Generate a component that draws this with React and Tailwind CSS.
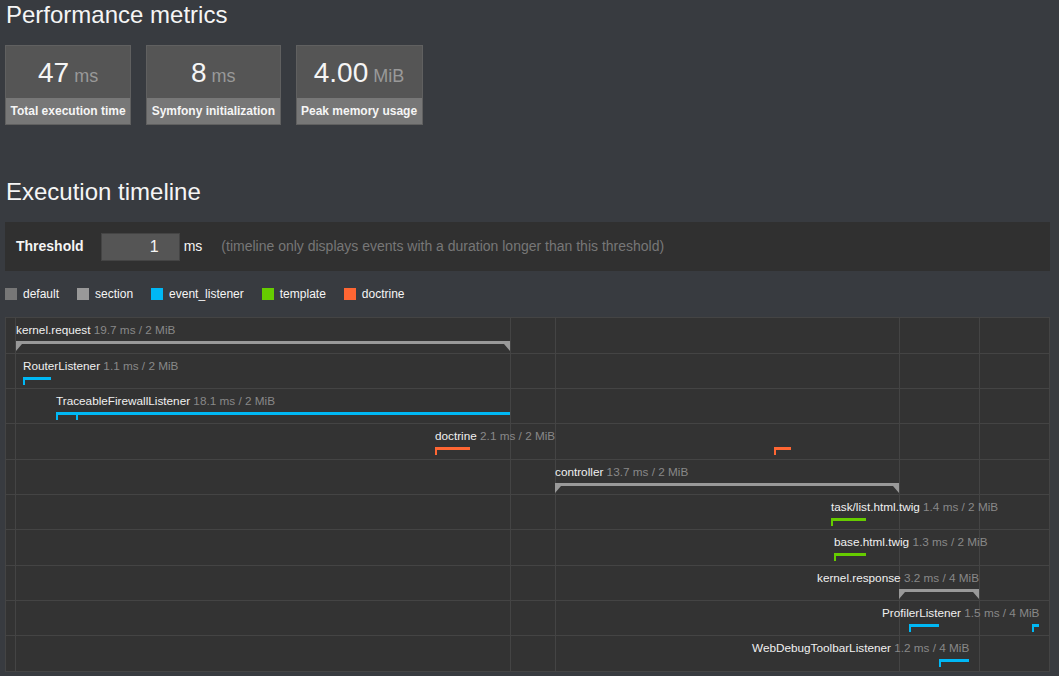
import React from 'react';

const BG = {
  section: 'bg-[#999999]',
  event_listener: 'bg-[#00b8f5]',
  template: 'bg-[#66cc00]',
  doctrine: 'bg-[#ff6633]',
};

const ROWS = [
  { h: 'h-[36px] border-b', name: 'kernel.request', info: '19.7 ms / 2 MiB', x: 16, cat: 'section', periods: [[16, 510]] },
  { h: 'h-[35px] border-b', name: 'RouterListener', info: '1.1 ms / 2 MiB', x: 23, cat: 'event_listener', periods: [[23, 51]] },
  { h: 'h-[35px] border-b', name: 'TraceableFirewallListener', info: '18.1 ms / 2 MiB', x: 56, cat: 'event_listener', periods: [[56, 76], [76, 510]] },
  { h: 'h-[36px] border-b', name: 'doctrine', info: '2.1 ms / 2 MiB', x: 435, cat: 'doctrine', periods: [[435, 470], [774, 791]] },
  { h: 'h-[35px] border-b', name: 'controller', info: '13.7 ms / 2 MiB', x: 555, cat: 'section', periods: [[555, 899]] },
  { h: 'h-[35px] border-b', name: 'task/list.html.twig', info: '1.4 ms / 2 MiB', x: 831, cat: 'template', periods: [[831, 866]] },
  { h: 'h-[36px] border-b', name: 'base.html.twig', info: '1.3 ms / 2 MiB', x: 834, cat: 'template', periods: [[834, 866]] },
  { h: 'h-[35px] border-b', name: 'kernel.response', info: '3.2 ms / 4 MiB', x: 817, cat: 'section', periods: [[899, 979]] },
  { h: 'h-[35px] border-b', name: 'ProfilerListener', info: '1.5 ms / 4 MiB', x: 882, cat: 'event_listener', periods: [[909, 939], [1032, 1039]] },
  { h: 'h-[35px]', name: 'WebDebugToolbarListener', info: '1.2 ms / 4 MiB', x: 752, cat: 'event_listener', periods: [[939, 969]] },
];

const GRID = [15, 510, 555, 899, 979];
const OFF = 6;

function Metric({ value, unit, label }) {
  return (
    <div className="border border-[#606060] bg-[#555555]">
      <div className="h-[52px] pt-[2px] text-center leading-[50px]">
        <span className="text-[28px] text-[#f5f5f5]">{value}</span>
        <span className="text-[18px] text-[#999999]"> {unit}</span>
      </div>
      <div className="h-[26px] bg-[#777777] px-[4.5px] text-center text-[12px] font-bold leading-[26px] text-[#f5f5f5] whitespace-nowrap">
        {label}
      </div>
    </div>
  );
}

function Period({ cat, from, to }) {
  const w = to - from;
  if (cat === 'section') {
    return (
      <svg
        className="absolute top-[23px]"
        style={{ left: from - OFF, width: w, height: 10 }}
        viewBox={`0 0 ${w} 10`}
      >
        <polygon
          className="fill-[#999999]"
          points={`0,0 ${w},0 ${w},10 ${w - 6},3 6,3 0,10`}
        />
      </svg>
    );
  }
  return (
    <div className="absolute top-[23px] h-[8px]" style={{ left: from - OFF, width: w }}>
      <div className={`h-[3px] w-full ${BG[cat]}`} />
      <div className={`absolute left-0 top-0 h-[8px] w-[2px] ${BG[cat]}`} />
    </div>
  );
}

function Legend({ cls, label }) {
  return (
    <div className="flex items-center mr-[18px]">
      <span className={`w-[12px] h-[12px] ${cls}`} />
      <span className="ml-[6px] text-[12px] leading-[12px] text-[#f5f5f5]">{label}</span>
    </div>
  );
}

export default function App() {
  return (
    <div className="min-h-screen w-full overflow-hidden bg-[#383b40] pl-[5px] font-['Liberation_Sans',Arial,Helvetica,sans-serif] text-[#f5f5f5]">
      <h2 className="pt-px pl-px text-[24px] leading-[28px] font-normal">Performance metrics</h2>

      <div className="mt-[16px] flex gap-[15px]">
        <Metric value="47" unit="ms" label="Total execution time" />
        <Metric value="8" unit="ms" label="Symfony initialization" />
        <Metric value="4.00" unit="MiB" label="Peak memory usage" />
      </div>

      <h2 className="mt-[52px] pt-px pl-px text-[24px] leading-[28px] font-normal">Execution timeline</h2>

      <div className="mt-[16px] flex h-[49px] w-[1045px] items-center bg-[#303030] pl-[11px]">
        <span className="text-[14px] font-bold text-[#f5f5f5]">Threshold</span>
        <input
          readOnly
          value="1"
          className="ml-[17px] h-[28px] w-[79px] border border-[#444444] bg-[#555555] pr-[20px] text-right text-[16px] text-[#f5f5f5] outline-none"
        />
        <span className="ml-[4px] text-[14px] text-[#f5f5f5]">ms</span>
        <span className="ml-[19px] text-[14px] text-[#777777]">
          (timeline only displays events with a duration longer than this threshold)
        </span>
      </div>

      <div className="mt-[17px] flex h-[12px] items-center">
        <Legend cls="bg-[#777777]" label="default" />
        <Legend cls="bg-[#999999]" label="section" />
        <Legend cls="bg-[#00b8f5]" label="event_listener" />
        <Legend cls="bg-[#66cc00]" label="template" />
        <Legend cls="bg-[#ff6633]" label="doctrine" />
      </div>

      <div className="relative mt-[17px] w-[1045px] border border-[#444444] bg-[#333333]">
        {GRID.map((x) => (
          <div
            key={x}
            className="absolute top-0 bottom-0 w-px bg-[#444444]"
            style={{ left: x - OFF }}
          />
        ))}
        {ROWS.map((r) => (
          <div key={r.name} className={`relative border-[#444444] ${r.h}`}>
            <div
              className="absolute top-[5px] whitespace-nowrap text-[11.75px] leading-[14px]"
              style={{ left: r.x - OFF }}
            >
              <span className="text-[#f0f0f0]">{r.name}</span>
              <span className="text-[#888888]"> {r.info}</span>
            </div>
            {r.periods.map(([a, b]) => (
              <Period key={a} cat={r.cat} from={a} to={b} />
            ))}
          </div>
        ))}
      </div>
    </div>
  );
}
